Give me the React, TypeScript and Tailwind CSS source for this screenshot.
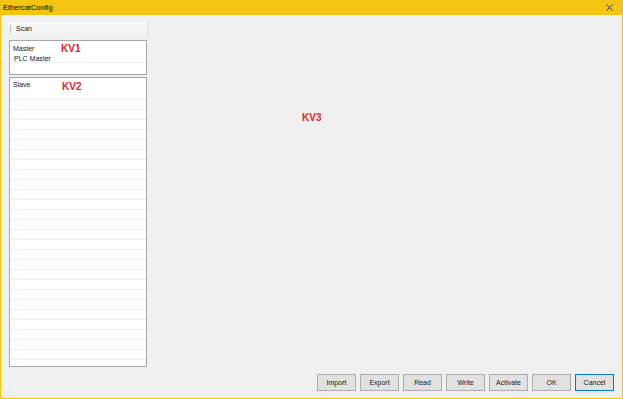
import React from 'react';

const buttons = ['Import', 'Export', 'Read', 'Write', 'Activate', 'OK', 'Cancel'];

function Row({ children }: { children?: React.ReactNode }) {
  return <div className="h-[10px] border-b border-[#efefef] shrink-0">{children}</div>;
}

export default function App() {
  const slaveRows = Array.from({ length: 27 });
  return (
    <div
      className="w-[623px] h-[399px] flex flex-col bg-[#f0f0f0] border-x border-b border-[#f6c511] text-[#1a1a1a] overflow-hidden"
      style={{ fontFamily: '"Liberation Sans", Arial, sans-serif' }}
    >
      {/* title bar */}
      <div className="h-[15px] bg-[#f6c511] flex items-center justify-between pl-[2px] pr-[9px] shrink-0">
        <span className="text-[7.5px] leading-none text-black">EthercatConfig</span>
        <svg width="7" height="7" viewBox="0 0 7 7" className="text-[#3a3000]">
          <path d="M0.5 0.5 L6.5 6.5 M6.5 0.5 L0.5 6.5" stroke="currentColor" strokeWidth="1" />
        </svg>
      </div>

      <div className="flex-1 flex flex-col px-[7px] pt-[7px] pb-[7px] min-h-0">
        <div className="flex-1 flex min-h-0">
          {/* left column */}
          <div className="w-[140px] flex flex-col shrink-0">
            <div className="h-[15px] rounded-t-[2px] bg-gradient-to-b from-[#f8f8f8] to-[#f2f2f2] border-r border-[#e0e0e0] flex items-center shrink-0">
              <div className="ml-[2px] w-[1px] h-[9px] border-l border-dotted border-[#9a9a9a]" />
              <span className="ml-[5px] text-[7px]">Scan</span>
            </div>

            <div className="mt-[3px] ml-[1px] w-[138px] h-[35px] border border-[#a7a7a7] bg-white flex flex-col shrink-0">
              <div className="h-[11px] flex items-end pl-[3px] relative">
                <span className="text-[7px] leading-none">Master</span>
                <span className="absolute left-[51px] top-[3px] text-[10px] font-bold text-[#e5222b] leading-none">KV1</span>
              </div>
              <div className="h-[11px] flex items-center pl-[4px] border-b border-[#efefef]">
                <span className="text-[7px] leading-none mt-[3px]">PLC Master</span>
              </div>
            </div>

            <div className="mt-[2px] ml-[1px] w-[138px] flex-1 min-h-0 border border-[#a7a7a7] bg-white flex flex-col overflow-hidden">
              <div className="h-[22px] border-b border-[#efefef] pl-[3px] pt-[3px] relative shrink-0">
                <span className="text-[7px] leading-none block">Slave</span>
                <span className="absolute left-[52px] top-[4px] text-[10px] font-bold text-[#e5222b] leading-none">KV2</span>
              </div>
              {slaveRows.map((_, i) => (
                <Row key={i} />
              ))}
            </div>
          </div>

          {/* right area */}
          <div className="flex-1 pl-[154px] pt-[91px]">
            <span className="block text-[10px] font-bold text-[#e5222b] leading-none">KV3</span>
          </div>
        </div>

        {/* button row */}
        <div className="flex justify-end gap-[4px] mt-[7px] pr-[1px] shrink-0">
          {buttons.map((b) => (
            <button
              key={b}
              className={`w-[39px] h-[17px] bg-[#e1e1e1] text-[7px] leading-none flex items-center justify-center border ${
                b === 'Cancel' ? 'border-[#0078d7]' : 'border-[#adadad]'
              }`}
            >
              {b}
            </button>
          ))}
        </div>
      </div>
    </div>
  );
}
